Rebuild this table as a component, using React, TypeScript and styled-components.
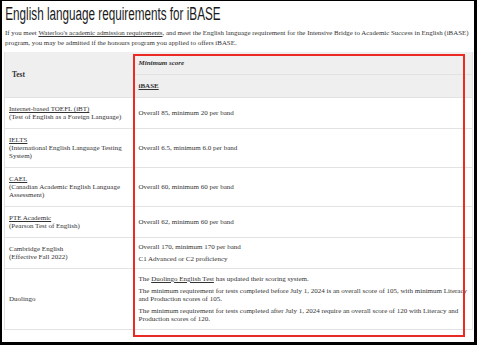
import React from "react";
import styled, { createGlobalStyle } from "styled-components";

const GlobalStyle = createGlobalStyle`
  html, body {
    margin: 0;
    padding: 0;
    background: #000;
  }
  body {
    width: 477px;
    height: 345px;
    overflow: hidden;
  }
`;

const Page = styled.div`
  margin: 1px 3px 3px 2px;
  height: 341px;
  padding: 0 1px 0 2px;
  box-sizing: border-box;
  background: #fff;
  color: #333;
  font-family: "Liberation Serif", "DejaVu Serif", serif;
  overflow: hidden;
`;

const Title = styled.h2`
  display: inline-block;
  margin: 0;
  padding: 2px 0 0 2px;
  font-family: "Liberation Sans", Arial, sans-serif;
  font-weight: 400;
  font-size: 18px;
  line-height: 22px;
  color: #1a1a1a;
  white-space: nowrap;
  transform: scaleX(0.65);
  transform-origin: left top;
`;

const Intro = styled.p`
  margin: 3px 0 4px 1px;
  font-size: 6.9px;
  line-height: 10px;
`;

const Link = styled.span`
  text-decoration: underline;
`;

const TableWrap = styled.div`
  position: relative;
`;

const Table = styled.table`
  width: 100%;
  table-layout: fixed;
  border-collapse: collapse;
  font-size: 7px;
  line-height: 8px;
  border-left: 1px solid #e2e2e2;
  border-right: 1px solid #e2e2e2;
  & td,
  & th {
    border-bottom: 1px solid #e2e2e2;
    text-align: left;
    vertical-align: middle;
  }
`;

const NameCol = styled.col`
  width: 129px;
`;

const HeadCell = styled.th<{ $first?: boolean }>`
  background: #efefef;
  padding: 7px ${({ $first }) => ($first ? "7px" : "5px")};
  font-weight: 700;
  font-size: ${({ $first }) => ($first ? "7.4px" : "7px")};
`;

const NameCell = styled.td`
  padding: 7px 4px;
`;

const ScoreCell = styled.td<{ $pad: number }>`
  padding: ${({ $pad }) => $pad}px 3px ${({ $pad }) => $pad}px 5px;
`;

const Para = styled.p<{ $gap: number }>`
  margin: 0;
  & + & {
    margin-top: ${({ $gap }) => $gap}px;
  }
`;

const Highlight = styled.div`
  position: absolute;
  left: 129px;
  top: 2px;
  width: 332px;
  height: 283px;
  box-sizing: border-box;
  border: 2px solid #ec2a24;
  pointer-events: none;
`;

type Row = {
  name: string;
  linked?: boolean;
  note?: string;
  scores: React.ReactNode[];
  pad?: number;
  gap?: number;
};

const rows: Row[] = [
  {
    name: "Internet-based TOEFL (iBT)",
    linked: true,
    note: "(Test of English as a Foreign Language)",
    scores: ["Overall 85, minimum 20 per band"]
  },
  {
    name: "IELTS",
    linked: true,
    note: "(International English Language Testing System)",
    scores: ["Overall 6.5, minimum 6.0 per band"]
  },
  {
    name: "CAEL",
    linked: true,
    note: "(Canadian Academic English Language Assessment)",
    scores: ["Overall 60, minimum 60 per band"]
  },
  {
    name: "PTE Academic",
    linked: true,
    note: "(Pearson Test of English)",
    scores: ["Overall 62, minimum 60 per band"]
  },
  {
    name: "Cambridge English",
    note: "(Effective Fall 2022)",
    scores: ["Overall 170, minimum 170 per band", "C1 Advanced or C2 proficiency"],
    pad: 4,
    gap: 9
  },
  {
    name: "Duolingo",
    scores: [
      <>
        The <Link>Duolingo English Test</Link> has updated their scoring system.
      </>,
      "The minimum requirement for tests completed before July 1, 2024 is an overall score of 105, with minimum Literacy and Production scores of 105.",
      "The minimum requirement for tests completed after July 1, 2024 require an overall score of 120 with Literacy and Production scores of 120."
    ],
    pad: 6,
    gap: 4
  }
];

export default function App() {
  return (
    <>
      <GlobalStyle />
      <Page>
        <Title>English language requirements for iBASE</Title>
        <Intro>
          If you meet <Link>Waterloo's academic admission requirements</Link>, and meet the
          English language requirement for the Intensive Bridge to Academic Success in English
          (iBASE) program, you may be admitted if the honours program you applied to offers iBASE.
        </Intro>
        <TableWrap>
          <Table>
            <colgroup>
              <NameCol />
              <col />
            </colgroup>
            <thead>
              <tr>
                <HeadCell $first rowSpan={2}>
                  Test
                </HeadCell>
                <HeadCell>
                  <em>Minimum score</em>
                </HeadCell>
              </tr>
              <tr>
                <HeadCell>
                  <Link>iBASE</Link>
                </HeadCell>
              </tr>
            </thead>
            <tbody>
              {rows.map((row, key) => (
                <tr key={key}>
                  <NameCell>
                    {row.linked ? <Link>{row.name}</Link> : row.name}
                    {row.note && (
                      <>
                        <br />
                        {row.note}
                      </>
                    )}
                  </NameCell>
                  <ScoreCell $pad={row.pad ?? 7}>
                    {row.scores.map((s, i) => (
                      <Para key={i} $gap={row.gap ?? 5}>
                        {s}
                      </Para>
                    ))}
                  </ScoreCell>
                </tr>
              ))}
            </tbody>
          </Table>
          <Highlight />
        </TableWrap>
      </Page>
    </>
  );
}
